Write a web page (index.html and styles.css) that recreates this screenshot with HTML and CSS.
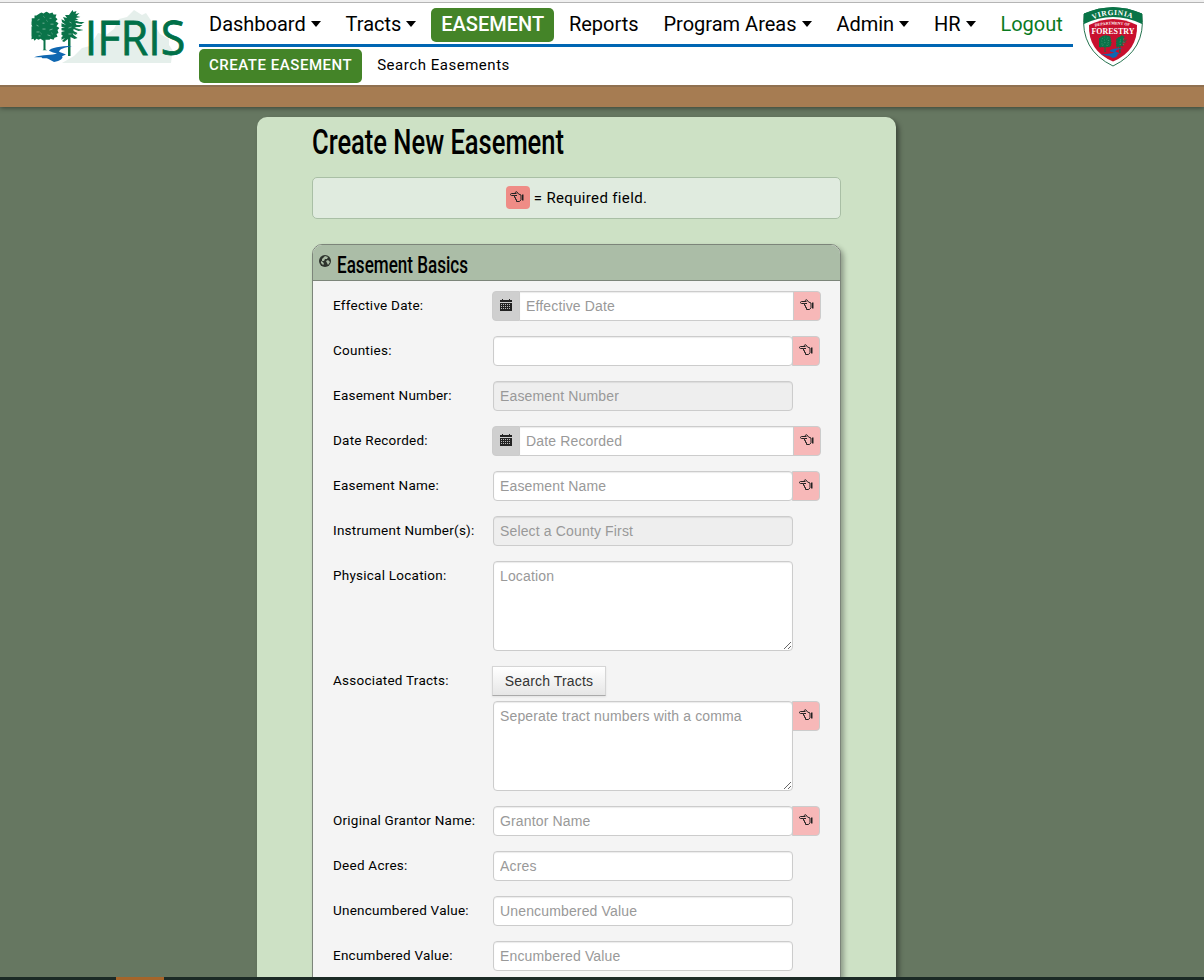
FILE: index.html
```html
<!DOCTYPE html>
<html lang="en">
<head>
<meta charset="utf-8">
<title>IFRIS - Create New Easement</title>
<link rel="stylesheet" href="styles.css">
</head>
<body>
<svg class="defs" width="0" height="0">
  <symbol id="hand" viewBox="0 0 14 12">
    <path d="M6.500 2.500H1.500C.2 2.500.2 4.500 1.500 4.500H4.500V6.500H5.500V8.500H6.500V10.500H9.500L11 8.800V4L8.500 3L6.800 .8C5.500 .4 5 1.500 5.500 2.500M4.500 4.500H7" fill="none" stroke="#222" stroke-width="1" stroke-linejoin="round"/>
    <path d="M12 3.500h1.500v6H12z" fill="#222"/>
  </symbol>
  <symbol id="calendar" viewBox="0 0 12 12">
    <path d="M2 0h1v1h6V0h1v1h2v2H0V1h2z" fill="#222"/>
    <path d="M0 4h12v8H0z" fill="#222"/>
    <path d="M1 5.500h10M1 7.500h10M1 9.500h10" stroke="#b8b8b8" stroke-width="1" stroke-dasharray="1 1"/>
  </symbol>
  <symbol id="leafy" viewBox="0 0 28 40" preserveAspectRatio="none">
    <path d="M8 2l2-1 2 1 3-2 3 2 3-1 1 2 3 0-1 3 2 2-2 2 3 2-2 3 3 2-2 2 1 3-2 1 1 3-3 1-1 2-3-1-1 1-4 0 0 10 2 1h-5l1-1V30l-3-2-2 1-2-1-2 2-1-2-3 1 1-3-2-1 1-3-2-1 2-3-2-2 4-1-3-3 2-2 0-3 3 0 0-3 2 0z" fill="#0a7349"/>
    <path d="M6 9l2-1M12 5l1 1M18 7l2 0M5 14l2 1M11 12l2 0M19 13l3 0M5 21l3 0M11 18l3 0M18 19l3-1M7 25l2 0M16 24l3 1M20 22l1 1M9 22l1 1M15 9l1 1" stroke="#b9d6c9" stroke-width=".6"/>
  </symbol>
  <symbol id="pine" viewBox="0 0 24 46" preserveAspectRatio="none">
    <path d="M11 0l1 2 3-1-1 3 4-1-3 3 4 1-5 1 3 2-4 0 5 2 5 0-3 2-6-1 1 2 6 0-3 2-5 0 4 2 5 1-5 1-5-2 0 2 4 2-2 2-3-2 1 2 4 3-3 1-4-2V46h-2.500V29l-4 3-2-1 3-3-4 2-3-1 5-3-1-1-4 0 3-3 4-1-5-1-4 1 3-3 6 0-6-2-3-2 5-1 5 2-4-3-1-3 4 2-2-4 4 1-2-3 4 0z" fill="#0a7349"/>
    <path d="M8 12l2 1M14 11l2-1M7 18l3-1M14 18l3 1M7 24l3 0M14 24l2 1" stroke="#b9d6c9" stroke-width=".6"/>
  </symbol>
  <symbol id="river" viewBox="0 0 38 17" preserveAspectRatio="none">
    <path d="M38 0C27 0 16 2 15 5l4 2 4 1c-4 2-15 1-23 4l8 0c-2 2 5 0 7 2l5 3c6-1 10-4 8-6l4-2-7-3c1-3 5-4 13-6z" fill="#0f67b1"/>
  </symbol>
</svg>
<header class="header">
  <svg class="logo" viewBox="30 8 156 58">
    <path d="M62 63l12-7 8-8 8-2 8-13 8 2 8-6 5-10 8-2 7-7 8 5 4-2 6 9 5 7 3 5 9 5v6l6 9-3 1-1 8z" fill="#e5efeb"/>
    <use href="#leafy" x="31.500" y="11.500" width="28" height="39"/>
    <use href="#pine" x="61.500" y="10" width="24" height="46"/>
    <use href="#river" x="34" y="46" width="38" height="16"/>
    <text class="logo-text" x="84.800" y="55.300" textLength="100.500" lengthAdjust="spacingAndGlyphs">IFRIS</text>
  </svg>
  <nav class="navs">
    <ul class="nav">
      <li class="drop">Dashboard</li><li class="drop">Tracts</li><li class="active">EASEMENT</li><li>Reports</li><li class="drop">Program Areas</li><li class="drop">Admin</li><li class="drop">HR</li><li class="logout">Logout</li>
    </ul>
    <ul class="subnav"><li class="active">CREATE EASEMENT</li><li>Search Easements</li></ul>
  </nav>
  <svg class="shield" viewBox="0 0 60 60">
    <path d="M1 7Q30-6 59 7Q63 43 30 59Q-3 43 1 7z" fill="#fff" stroke="#26734f" stroke-width="1"/>
    <path d="M1 6.500Q30-6 59 6.500V17Q30 3 1 17z" fill="#087447"/>
    <path d="M6 18Q30 6 54 18Q55 44 30 54.500Q5 44 6 18z" fill="#c8102e"/>
    <path id="arc1" d="M10 12.500Q30 3.500 52 12.500" fill="none"/>
    <path id="arc2" d="M12 19.500Q30 15.500 49 19.500" fill="none"/>
    <text class="shield-title"><textPath href="#arc1" textLength="40">VIRGINIA</textPath></text>
    <text class="shield-small"><textPath href="#arc2" textLength="35">DEPARTMENT OF</textPath></text>
    <text class="shield-name" x="8.500" y="26.500" textLength="43" lengthAdjust="spacingAndGlyphs">FORESTRY</text>
    <use href="#leafy" x="16" y="28" width="13" height="17"/>
    <use href="#pine" x="33" y="28" width="12" height="18"/>
    <use href="#river" x="18" y="41" width="22" height="10"/>
  </svg>
</header>
<div class="band"></div>
<main class="page">
  <h1 class="title"><svg width="260" height="50"><text x="0" y="31.500" textLength="252" lengthAdjust="spacingAndGlyphs">Create New Easement</text></svg></h1>
  <div class="notice"><span class="badge"><svg class="hand"><use href="#hand"/></svg></span>= Required field.</div>
  <section class="panel">
    <h2 class="panel-head">
      <svg class="globe" viewBox="0 0 12 12"><circle cx="6" cy="6" r="6" fill="#2d332d"/><path d="M6 1l3 1-1 2-2 0-1 2-2 0 0-2zM7 6l2-1 2 2-2 3-1-2zM2 6l2 1 1 2-1 1-2-2z" fill="#a9baa4"/></svg>
      <svg width="140" height="30"><text x="0" y="21.500" textLength="131" lengthAdjust="spacingAndGlyphs">Easement Basics</text></svg>
    </h2>
    <form class="form">
      <div class="row"><label>Effective Date:</label><div class="group date"><span class="pre"><svg class="cal"><use href="#calendar"/></svg></span><input placeholder="Effective Date"><span class="req"><svg class="hand"><use href="#hand"/></svg></span></div></div>
      <div class="row"><label>Counties:</label><div class="group"><input><span class="req"><svg class="hand"><use href="#hand"/></svg></span></div></div>
      <div class="row"><label>Easement Number:</label><div class="group"><input disabled placeholder="Easement Number"></div></div>
      <div class="row"><label>Date Recorded:</label><div class="group date"><span class="pre"><svg class="cal"><use href="#calendar"/></svg></span><input placeholder="Date Recorded"><span class="req"><svg class="hand"><use href="#hand"/></svg></span></div></div>
      <div class="row"><label>Easement Name:</label><div class="group"><input placeholder="Easement Name"><span class="req"><svg class="hand"><use href="#hand"/></svg></span></div></div>
      <div class="row"><label>Instrument Number(s):</label><div class="group"><input disabled placeholder="Select a County First"></div></div>
      <div class="row"><label>Physical Location:</label><div class="group"><textarea placeholder="Location"></textarea></div></div>
      <div class="row"><label>Associated Tracts:</label><div class="stack"><button type="button" class="search">Search Tracts</button><div class="group"><textarea placeholder="Seperate tract numbers with a comma"></textarea><span class="req"><svg class="hand"><use href="#hand"/></svg></span></div></div></div>
      <div class="row"><label>Original Grantor Name:</label><div class="group"><input placeholder="Grantor Name"><span class="req"><svg class="hand"><use href="#hand"/></svg></span></div></div>
      <div class="row"><label>Deed Acres:</label><div class="group"><input placeholder="Acres"></div></div>
      <div class="row"><label>Unencumbered Value:</label><div class="group"><input placeholder="Unencumbered Value"></div></div>
      <div class="row"><label>Encumbered Value:</label><div class="group"><input placeholder="Encumbered Value"></div></div>
    </form>
  </section>
</main>
<footer class="taskbar"><div class="task"></div></footer>
</body>
</html>
```
FILE: styles.css
```css
* { box-sizing: border-box; }
html, body { height: 100%; }
body { margin: 0; height: 980px; overflow: hidden; display: flex; flex-direction: column; background: #667761; font-family: Roboto, sans-serif; color: #000; }
svg { overflow: visible; }
.defs { position: absolute; }
ul { list-style: none; margin: 0; padding: 0; }
.header { flex: none; height: 85px; background: #fff; border-top: 2px solid #f0f0f0; box-shadow: inset 0 1px #b5b5b5; display: flex; align-items: flex-start; }
.logo { width: 156px; height: 58px; margin: 6px 13px 0 30px; }
.logo-text { font: 47px "Open Sans", sans-serif; fill: #007048; stroke: #007048; stroke-width: .8px; }
.navs { width: 874px; }
.nav { display: flex; gap: 4.850px; height: 45px; padding-top: 6px; border-bottom: 3px solid #0066b3; font-size: 20px; white-space: nowrap; }
.nav li { height: 34px; line-height: 33px; padding: 0 10px; border-radius: 5px; }
.nav .drop::after { content: ""; display: inline-block; border: 5px solid transparent; border-top: 6px solid #000; border-bottom: 0; margin-left: 5px; vertical-align: 4px; }
.nav .active, .subnav .active { background: #448428; color: #fff; font-weight: 500; }
.nav .logout { color: #0a7a1e; }
.subnav { display: flex; gap: 5px; padding-top: 2px; font-size: 15px; letter-spacing: .530px; }
.subnav li { height: 34px; line-height: 32px; padding: 0 10px; border-radius: 5px; }
.shield { width: 60px; height: 60px; margin: 5px 0 0 10px; }
.shield text { fill: #fff; font-family: "Liberation Serif", serif; font-weight: bold; }
.shield .shield-title { font-size: 7.500px; }
.shield .shield-small { font-size: 4px; }
.shield .shield-name { font-size: 7.500px; }
.band { flex: none; height: 22px; background: #a67c52; border-top: 2px solid #8f7050; box-shadow: 0 1px 5px rgba(0,0,0,.45); clip-path: inset(0 0 -10px); }
.page { flex: 1; min-height: 0; overflow: hidden; width: 639px; margin: 10px 0 0 257px; padding: 5px 55px 0; background: #cde1c5; border-radius: 10px 10px 0 0; box-shadow: 3px 3px 5px rgba(0,0,0,.4); }
.title, .panel-head { margin: 0; font-weight: 500; }
.title { height: 55px; font-size: 35px; }
.title svg, .panel-head svg { display: block; }
.notice { height: 42px; width: 529px; border: 1px solid #a9bfa5; border-radius: 5px; background: #e0ebdf; display: flex; align-items: center; justify-content: center; gap: 4px; padding-bottom: 1px; font-size: 15px; letter-spacing: .350px; }
.badge { width: 24px; height: 23px; border-radius: 4px; background: #ef8c86; display: flex; align-items: center; justify-content: center; }
.hand { width: 14px; height: 12px; margin: 0 1px 2px 0; }
.cal { width: 12px; height: 12px; margin: 0 1px 2px 0; }
.panel { width: 529px; height: 800px; margin-top: 25px; border: 1px solid #7c857a; border-radius: 10px; background: #f4f4f4; box-shadow: 3px 3px 5px rgba(0,0,0,.3); }
.panel-head { height: 36px; padding: 6px 6px 0; display: flex; gap: 6px; font-size: 24px; background: #abbda7; border-bottom: 1px solid #7c857a; border-radius: 9px 9px 0 0; }
.globe { width: 12px; height: 12px; margin-top: 4px; }
.form { padding: 10px 0 0 20px; }
.row { display: flex; align-items: flex-start; margin-bottom: 15px; }
.row label { width: 160px; height: 30px; line-height: 29px; font-size: 13.500px; letter-spacing: .240px; white-space: nowrap; }
.group { display: flex; align-items: flex-start; }
.date { margin-left: -1px; }
input, textarea { width: 300px; height: 30px; margin: 0; padding: 4px 6px; border: 1px solid #ccc; border-radius: 4px; font: 14px/20px "Liberation Sans", Arial, sans-serif; letter-spacing: .150px; background: #fff; box-shadow: inset 0 1px 1px rgba(0,0,0,.08); }
textarea { height: 90px; display: block; resize: vertical; }
input::placeholder, textarea::placeholder { color: #999; opacity: 1; }
input:disabled { background: #eee; }
.date input { width: 274px; border-left: 0; border-radius: 0; }
.pre, .req { height: 30px; width: 28px; display: flex; align-items: center; justify-content: center; border: 1px solid #ccc; }
.pre { background: #cfcfcf; border-radius: 4px 0 0 4px; }
.req { background: #f7b8b8; border-radius: 0 4px 4px 0; margin-left: -1px; }
.stack { display: flex; flex-direction: column; gap: 5px; }
.search { width: 114px; height: 30px; margin-left: -1px; padding: 0; border: 1px solid #d5d5d5; border-bottom-color: #aaa; background: linear-gradient(#fff, #e6e6e6); box-shadow: 0 1px 2px rgba(0,0,0,.08); font: 14px "Liberation Sans", Arial, sans-serif; letter-spacing: .150px; color: #333; }
.taskbar { flex: none; position: relative; height: 3px; background: #1c2b26; padding-left: 116px; }
.task { width: 48px; height: 3px; background: #a5652a; }
```
